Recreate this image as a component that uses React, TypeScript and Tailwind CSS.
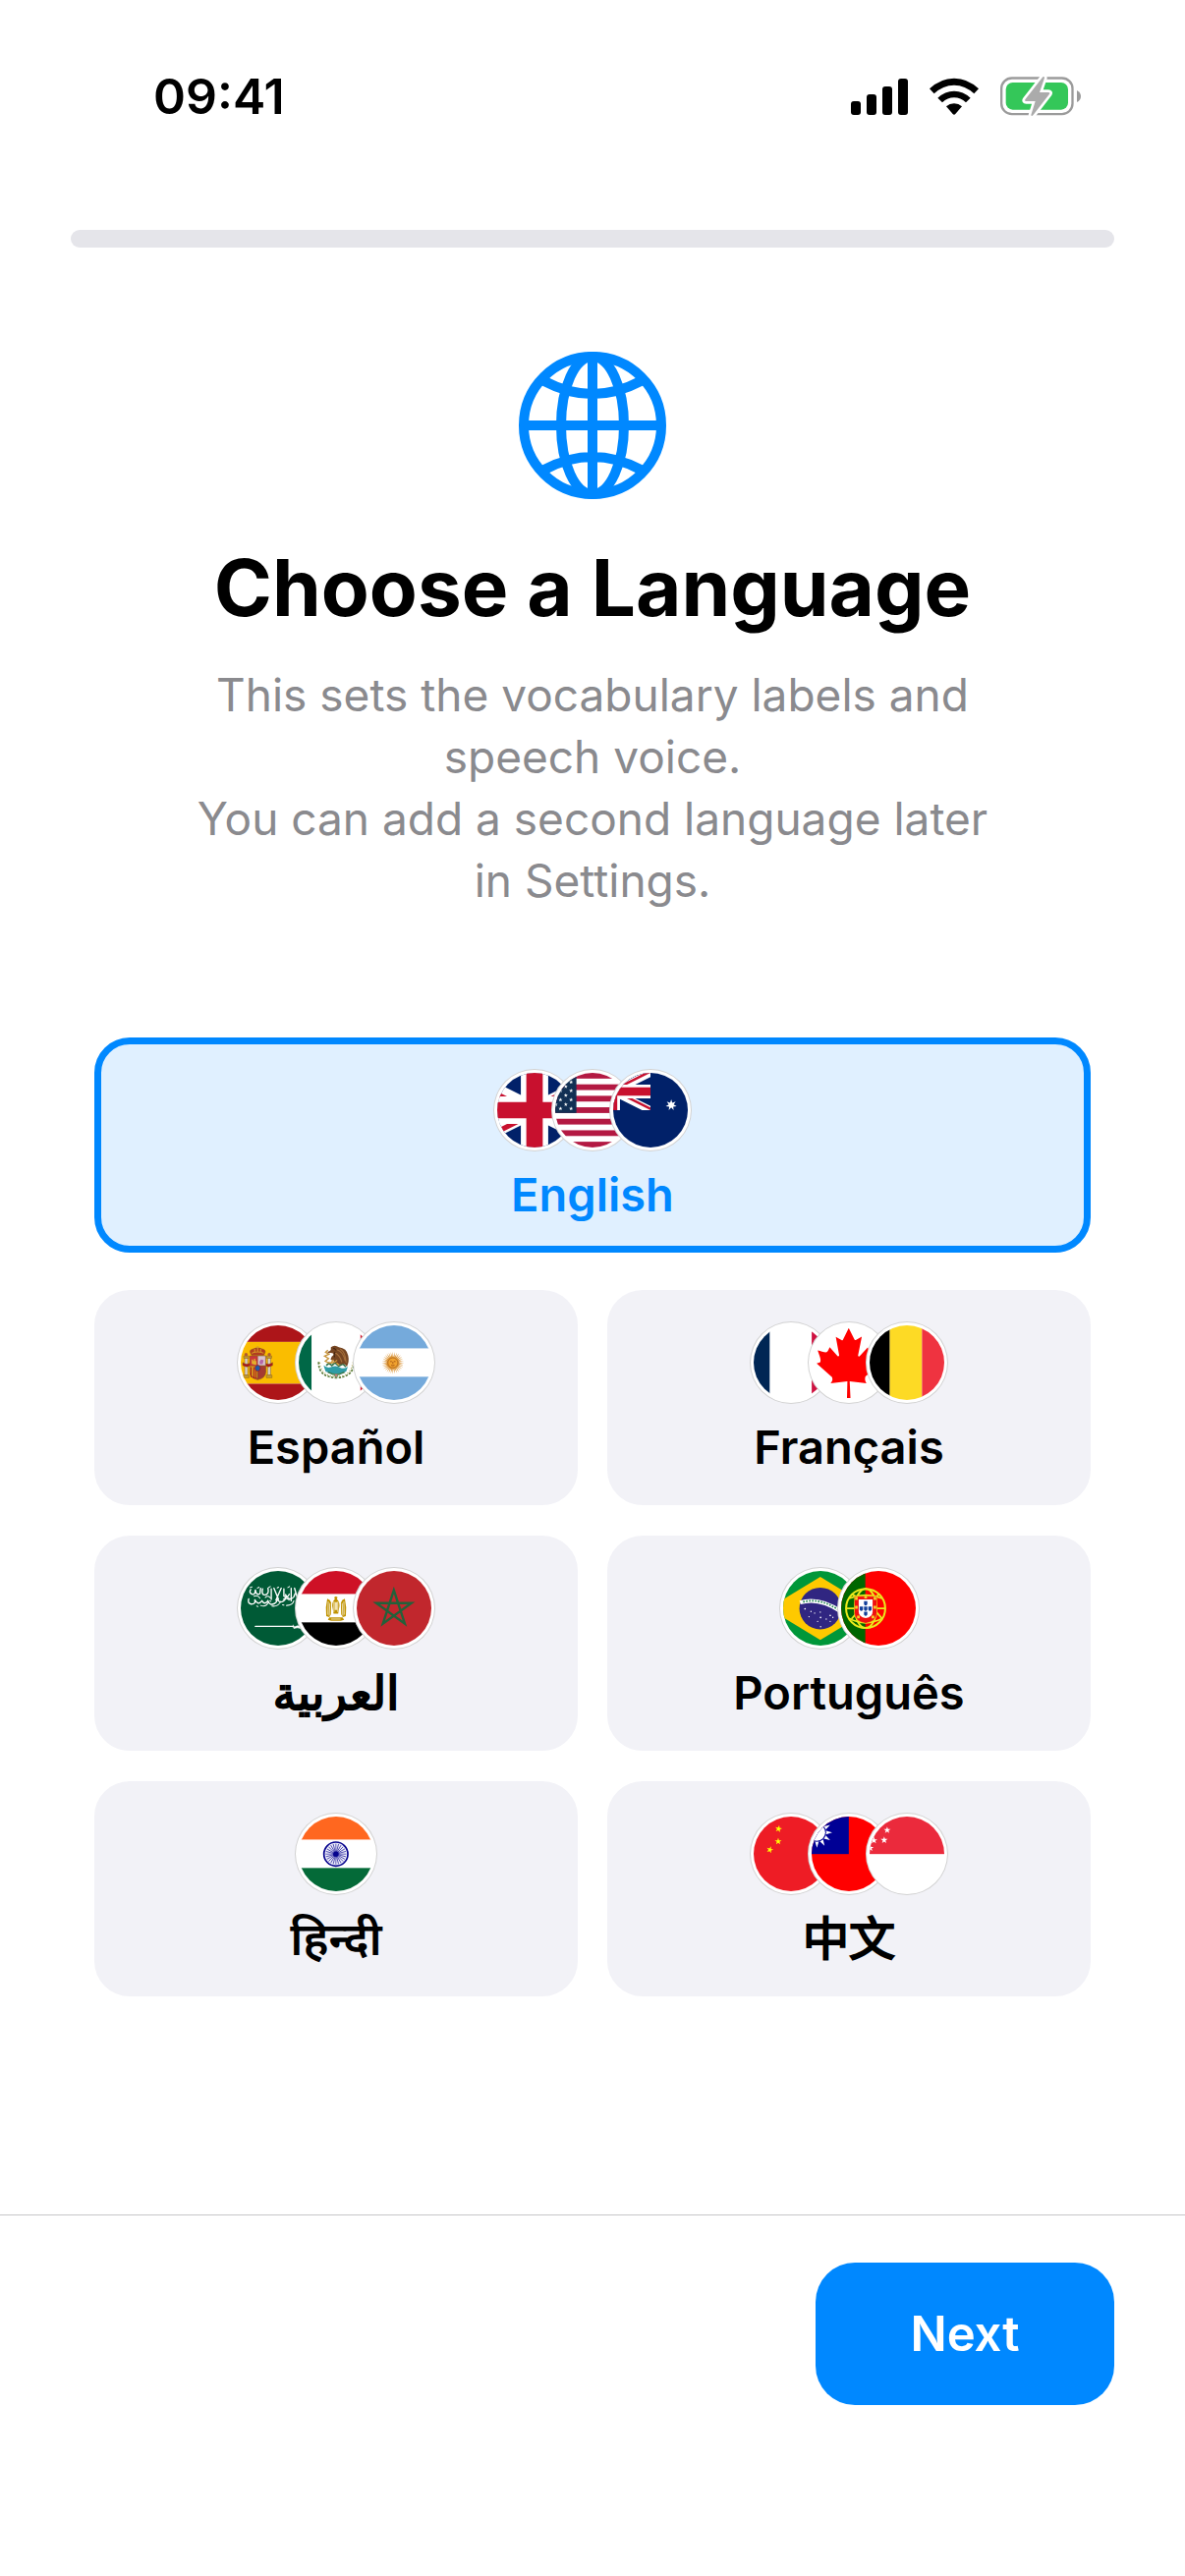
import { useState } from 'react';
import type { ReactNode } from 'react';

const starPoints = (cx: number, cy: number, r: number, tips = 5, inner = 0.382, turn = 0) => {
    const points: string[] = [];
    for (let i = 0; i < tips * 2; i++) {
        const radius = i % 2 === 0 ? r : r * inner;
        const angle = (Math.PI * i) / tips - Math.PI / 2 + turn;
        points.push(`${(cx + radius * Math.cos(angle)).toFixed(1)},${(cy + radius * Math.sin(angle)).toFixed(1)}`);
    }
    return points.join(' ');
};

// Three horizontal or vertical bands on the 225 unit flag canvas
function Bands({ colors, at, vertical = false }: { colors: string[]; at: [number, number]; vertical?: boolean }) {
    const edges = [0, at[0], at[1], 225];
    return (
        <>
            {colors.map((color, i) =>
                vertical ? (
                    <rect key={i} x={edges[i]} y="0" width={edges[i + 1] - edges[i]} height="225" fill={color} />
                ) : (
                    <rect key={i} x="0" y={edges[i]} width="225" height={edges[i + 1] - edges[i]} fill={color} />
                )
            )}
        </>
    );
}

function UnionJack({ id }: { id: string }) {
    return (
        <>
            <clipPath id={`${id}-frame`}>
                <path d="M0 0h60v30H0z" />
            </clipPath>
            <clipPath id={`${id}-saltire`}>
                <path d="M30 15h30v15zv15H0zH0V0zV0h30z" />
            </clipPath>
            <g clipPath={`url(#${id}-frame)`}>
                <path d="M0 0h60v30H0z" fill="#012169" />
                <path d="M0 0l60 30M60 0L0 30" stroke="#fff" strokeWidth="6" />
                <path d="M0 0l60 30M60 0L0 30" stroke="#C8102E" strokeWidth="4" clipPath={`url(#${id}-saltire)`} />
                <path d="M30 0v30M0 15h60" stroke="#fff" strokeWidth="11" />
                <path d="M30 0v30M0 15h60" stroke="#C8102E" strokeWidth="6.6" />
            </g>
        </>
    );
}

const flags: Record<string, ReactNode> = {
    gb: (
        <g transform="translate(-112.5 0) scale(7.5)">
            <UnionJack id="gb" />
        </g>
    ),
    us: (
        <>
            <rect width="225" height="225" fill="#fff" />
            {[0, 2, 4, 6, 8, 10, 12].map((i) => (
                <rect key={i} x="0" y={i * 17.3} width="225" height="17.3" fill="#B31942" />
            ))}
            <rect width="64" height="121" fill="#123054" />
            {[28, 54, 81, 108].map((y) => (
                <g key={y} fill="#fff">
                    <polygon points={starPoints(48, y, 6.5)} />
                    <polygon points={starPoints(16, y, 6.5)} />
                    <polygon points={starPoints(32, y - 13, 6.5)} />
                    <polygon points={starPoints(2, y - 13, 6.5)} />
                </g>
            ))}
        </>
    ),
    au: (
        <>
            <rect width="225" height="225" fill="#012169" />
            <g transform="translate(-112.5 0) scale(3.75)">
                <UnionJack id="au" />
            </g>
            <polygon points={starPoints(175, 97, 17, 7, 0.45)} fill="#fff" />
        </>
    ),
    es: (
        <>
            <Bands colors={['#AD1519', '#FABD00', '#AD1519']} at={[50, 176]} />
            <g stroke="#8A5A20" strokeWidth="1.5">
                <path d="M12 98h9v52h-9zM81 98h9v52h-9z" fill="#D9D2C8" />
                <path d="M9 92h15v7H9zM78 92h15v7H78zM8 150h17v8H8zM77 150h17v8H77z" fill="#C8A02C" />
                <path d="M6 112q12 10 24 0v9q-12 8-24 0zM72 112q12 10 24 0v9q-12 8-24 0z" fill="#AD1519" />
                <path d="M27 92h48v48q0 20-24 24-24-4-24-24z" fill="#C9363B" />
                <path d="M51 92h24v30H51z" fill="#D9C3CF" />
                <path d="M27 122h24v38q-24-4-24-20z" fill="#D9A520" />
                <path d="M51 122h24v18q0 17-24 22z" fill="#A53A32" />
                <path d="M33 90q-12-16 5-19 13-8 26 0 17 3 5 19z" fill="#B33D20" />
            </g>
            <path d="M31 126v30M39 126v34M45 126v34" stroke="#AD1519" strokeWidth="3" />
            <path d="M33 116v-13h4v4h3v-6h4v6h3v13z" fill="#E3B02C" />
            <path d="M57 117q-2-10 5-14l7 2-3 12z" fill="#B366A8" />
            <ellipse cx="51" cy="129" rx="8" ry="9" fill="#1F5CA8" stroke="#AD1519" strokeWidth="2" />
            <path d="M33 84q18-8 36 0M42 82V71M51 80V62M60 82V71M46 66h10" stroke="#D8A126" strokeWidth="3" fill="none" />
            <circle cx="16" cy="88" r="5" fill="#B05A30" />
            <circle cx="86" cy="88" r="5" fill="#B05A30" />
        </>
    ),
    mx: (
        <>
            <Bands colors={['#006847', '#FFFFFF', '#CE1126']} at={[39, 186]} vertical />
            <path d="M60 110q-1 46 53 48 54-2 53-48" fill="none" stroke="#5B7B3A" strokeWidth="5" strokeDasharray="7 4" />
            <path d="M64 112q2 40 49 43 47-3 49-43" fill="none" stroke="#B0A24A" strokeWidth="3" strokeDasharray="3 6" />
            <path d="M75 121q12 10 24 4 14-6 27 3 10 5 22-4l-5 15q-30 15-62 0z" fill="#2F9CA5" />
            <path d="M83 121l8-7 9 7 9-8 12 10 12-7 9 9M88 141q24 14 50 0" fill="none" stroke="#35724A" strokeWidth="5" />
            <path d="M97 66q11-9 24 0 24 3 28 25 4 18-4 34-4-10-13-9-9 5-19-1-8-9-17-12 2-10 10-14-1-7-11-6-9 2-8-4 6 1 10-5z" fill="#754522" />
            <path d="M116 74q17 4 24 33M125 71q16 10 18 42M110 83q14 7 20 28" fill="none" stroke="#A7713D" strokeWidth="3" />
            <path d="M110 80q-5 8-2 16M104 69q6 1 8 6" fill="none" stroke="#3E210E" strokeWidth="3" />
            <path d="M88 75l-7 6 10 6-13 6 12 7-10 8q13 9 28 3l8-6" fill="none" stroke="#C7953B" strokeWidth="4" />
            <path d="M98 112l7-9M122 121l-8-8" stroke="#D59A38" strokeWidth="4" />
            <path d="M105 147h15l-7 13z" fill="#D4767B" />
            <path d="M100 148h7l5 10M125 148h-6l-5 10" fill="none" stroke="#5E9A63" strokeWidth="3" />
        </>
    ),
    ar: (
        <>
            <Bands colors={['#75AADB', '#FFFFFF', '#75AADB']} at={[70, 155]} />
            <polygon points={starPoints(109, 113, 34, 32, 0.5)} fill="#D9902E" />
            <circle cx="109" cy="113" r="15" fill="#F0A22E" stroke="#A45E1C" strokeWidth="2" />
            <path d="M101 109h5M112 109h5M109 110v6M104 120q5 3 10 0" fill="none" stroke="#85340A" strokeWidth="2" />
        </>
    ),
    fr: <Bands colors={['#002654', '#FFFFFF', '#CE1140']} at={[49, 175]} vertical />,
    ca: (
        <>
            <rect width="225" height="225" fill="#fff" />
            <path
                transform="translate(-127 -64) scale(.757)"
                d="m201 232-13.3 4.4 61.4 54c4.7 13.7-1.6 17.8-5.6 25l66.6-8.4-1.6 67 13.9-.3-3.1-66.6 66.7 8c-4.1-8.7-7.8-13.3-4-27.2l61.3-51-10.7-4c-8.8-6.8 3.8-32.6 5.6-48.9 0 0-35.7 12.3-38 5.8l-9.2-17.5-32.6 35.8c-3.5.9-5-.5-5.9-3.5l15-74.8-23.8 13.4c-2 .9-4 .1-5.2-2.2l-23-46-23.6 47.8c-1.8 1.7-3.6 1.9-5 .7L264 130.8l13.7 74.1c-1.1 3-3.7 3.8-6.7 2.2l-31.2-35.3c-4 6.5-6.8 17.1-12.2 19.5-5.4 2.3-23.5-4.5-35.6-7 4.2 14.8 17 39.6 9 47.7z"
                fill="#FF0000"
            />
        </>
    ),
    be: <Bands colors={['#000000', '#FDDA25', '#EF3340']} at={[61, 158]} vertical />,
    sa: (
        <>
            <rect width="225" height="225" fill="#005A36" />
            <g fill="none" stroke="#fff" strokeWidth="4" strokeLinecap="round">
                <path d="M24 84q-4 14 8 16 14 0 10-14 10 20 22 4 8 14 18 0 6 16 20 8 10-6 6-16 10 20 24 6 8-10 2-18 12 24 26 8l4-10" />
                <path d="M30 56q-6 10 4 14t10-14q2 20 14 12l2-16M66 54q-4 20 8 18t8-20M92 54v32M100 52l14 34M122 52l-16 36M130 54v22q12 6 16-6M152 52v38M162 52l10 34" />
                <path d="M60 104q16 6 24-10M94 106q20 2 26-14M138 104q18 0 22-14M40 76q12-4 18 6M74 80q8-8 16 2M128 86q10-8 18 2" strokeWidth="3" />
                <path d="M28 50l6-2M50 52l5-3M84 50l5-3M110 51l4-2M142 50l5-3M48 106l4 1M88 90l3 2M126 102l4 1" strokeWidth="3" />
            </g>
            <path d="M44 167h116" stroke="#fff" strokeWidth="4" strokeLinecap="round" />
            <path d="M158 162v10M160 170q10-8 22-3l-2 6q-8-4-20 0z" fill="#fff" stroke="#fff" strokeWidth="2" />
        </>
    ),
    eg: (
        <>
            <Bands colors={['#CE1126', '#FFFFFF', '#000000']} at={[70, 155]} />
            <g fill="#C09300">
                <path d="M107 80q4-6 10-1l-2 6q8 6 8 20l-4 24h-14l-4-24q0-14 8-20z" />
                <path d="M86 84q10 3 12 12l-1 35-5 8-9-3q-3-28 3-52zM139 84q-10 3-12 12l1 35 5 8 9-3q3-28-3-52z" />
                <path d="M92 140h40l5 7-10 3H98l-10-3z" />
            </g>
            <path d="M89 92l-1 40M94 97l-2 38M136 92l1 40M131 97l2 38M106 92v32M118 92v32M98 145h28" stroke="#fff" strokeWidth="2" />
            <path d="M108 94h9v24h-9z" fill="#F2E3B1" />
        </>
    ),
    ma: (
        <>
            <rect width="225" height="225" fill="#C1272D" />
            <path d="M112 58l33 101-86-62h106l-86 62z" fill="none" stroke="#22613A" strokeWidth="7" />
        </>
    ),
    br: (
        <>
            <rect width="225" height="225" fill="#009739" />
            <path d="M112 18l157 95-157 95-157-95z" fill="#FEC900" />
            <circle cx="112" cy="113" r="63" fill="#302681" />
            <path d="M51 95q58-17 121 26" fill="none" stroke="#fff" strokeWidth="12" />
            <path d="M60 93q52-12 105 23" fill="none" stroke="#2A8A58" strokeWidth="5" strokeDasharray="5 4" />
            <g fill="#fff">
                <circle cx="66" cy="114" r="2.5" />
                <circle cx="84" cy="122" r="2" />
                <circle cx="78" cy="138" r="2" />
                <circle cx="95" cy="127" r="2" />
                <circle cx="112" cy="124" r="2" />
                <circle cx="113" cy="140" r="2.5" />
                <circle cx="104" cy="152" r="2" />
                <circle cx="130" cy="145" r="2" />
                <circle cx="142" cy="134" r="2.5" />
                <circle cx="150" cy="140" r="2" />
                <circle cx="142" cy="152" r="2" />
                <circle cx="113" cy="168" r="2" />
            </g>
        </>
    ),
    pt: (
        <>
            <rect width="225" height="225" fill="#FF0000" />
            <rect width="73" height="225" fill="#006600" />
            <g fill="none" stroke="#EBE91C" strokeWidth="6">
                <circle cx="74" cy="113" r="59" />
                <ellipse cx="74" cy="113" rx="32" ry="59" />
                <path d="M15 113h118M24 83q50-20 100 0M24 143q50 26 100 0M32 70q50 22 92 74M116 70q-40 20-84 74" strokeWidth="5" />
            </g>
            <path d="M40 76h68v50q0 26-34 32-34-6-34-32z" fill="#F01010" stroke="#EBE91C" strokeWidth="1.5" />
            <path d="M53 86h42v36q0 17-21 20-21-3-21-20z" fill="#fff" />
            <path d="M69 91h10v10q-5 7-10 0zM69 107h10v10q-5 7-10 0zM69 123h10v9q-5 7-10 0zM56 107h10v10q-5 7-10 0zM82 107h10v10q-5 7-10 0z" fill="#12409A" />
            <g fill="#F3D32B">
                <path d="M42 78h8v9h-8zM70 75h8v8h-8zM98 78h8v9h-8zM42 105h8v9h-8zM98 105h8v9h-8zM48 135h8v8h-8zM92 135h8v8h-8z" />
            </g>
        </>
    ),
    in: (
        <>
            <Bands colors={['#FF671F', '#FFFFFF', '#046A38']} at={[70, 155]} />
            <circle cx="112" cy="113" r="36" fill="#ECECFA" stroke="#06038D" strokeWidth="5" />
            {Array.from({ length: 24 }, (_, i) => (
                <path key={i} d="M112 113v-31" stroke="#06038D" strokeWidth="1.8" transform={`rotate(${i * 15} 112 113)`} />
            ))}
            <circle cx="112" cy="113" r="8" fill="#06038D" />
        </>
    ),
    cn: (
        <>
            <rect width="225" height="225" fill="#EE1C25" />
            <g fill="#FFFF00">
                <polygon points={starPoints(75, 37, 11, 5, 0.382, 0.2)} />
                <polygon points={starPoints(74, 75, 11)} />
                <polygon points={starPoints(49, 100, 11, 5, 0.382, 0.3)} />
            </g>
        </>
    ),
    tw: (
        <>
            <rect width="225" height="225" fill="#FF0000" />
            <rect width="112" height="113" fill="#000095" />
            <polygon points={starPoints(16, 48, 46, 12, 0.55)} fill="#fff" />
            <circle cx="16" cy="48" r="28" fill="#000095" />
            <circle cx="16" cy="48" r="25" fill="#fff" />
        </>
    ),
    sg: (
        <>
            <rect width="225" height="225" fill="#fff" />
            <rect width="225" height="113" fill="#EB2A3C" />
            <g fill="#fff">
                <polygon points={starPoints(53, 41, 11)} />
                <polygon points={starPoints(44, 71, 11)} />
                <polygon points={starPoints(13, 72, 11)} />
                <polygon points={starPoints(2, 95, 11)} />
            </g>
        </>
    ),
};

// The Arabic and Chinese fonts have no semibold cut, so a thin stroke thickens the regular one
const regular = 'text-[47px] font-semibold leading-[57px]';
const stroked = 'text-[47px] font-normal leading-[57px] [-webkit-text-stroke:2px_currentColor]';

const languages = [
    { code: 'en', name: 'English', flags: ['gb', 'us', 'au'], label: regular },
    { code: 'es', name: 'Español', flags: ['es', 'mx', 'ar'], label: regular },
    { code: 'fr', name: 'Français', flags: ['fr', 'ca', 'be'], label: regular },
    { code: 'ar', name: 'العربية', flags: ['sa', 'eg', 'ma'], label: stroked },
    { code: 'pt', name: 'Português', flags: ['br', 'pt'], label: regular },
    { code: 'hi', name: 'हिन्दी', flags: ['in'], label: regular },
    { code: 'zh', name: '中文', flags: ['cn', 'tw', 'sg'], label: stroked },
];

function Flag({ code }: { code: string }) {
    return (
        <span className="size-[84px] rounded-full bg-white p-1 -ml-[25px] shadow-[inset_0_0_0_1px_rgba(0,0,0,0.18)] first:ml-0">
            <svg viewBox="0 0 225 225" className="block size-full rounded-full" aria-hidden="true">
                {flags[code]}
            </svg>
        </span>
    );
}

function StatusBar() {
    return (
        <header className="flex h-[196px] items-center justify-between pl-[156px] pr-[106px] text-black">
            <time className="text-[50px] font-semibold leading-none">09:41</time>
            <div className="flex items-center gap-[22px]">
                {/* Signal */}
                <svg width="58" height="38" viewBox="0 0 58 38" aria-hidden="true">
                    <rect x="0" y="24" width="10" height="14" rx="3" />
                    <rect x="16" y="17" width="10" height="21" rx="3" />
                    <rect x="32" y="9" width="10" height="29" rx="3" />
                    <rect x="48" y="1" width="10" height="37" rx="3" />
                </svg>
                {/* Wi-Fi */}
                <svg width="50" height="38" viewBox="287 55 150 114" aria-hidden="true">
                    <path d="M287 89q33-32 75-32t75 32l-14 15q-27-26-61-26t-61 26z" />
                    <path d="M312 117q22-21 50-21t50 21l-14 14q-16-15-36-15t-36 15z" />
                    <path d="M338 143q10-9 24-9t24 9l-20 23q-4 4-8 0z" />
                </svg>
                {/* Battery */}
                <svg width="82" height="42" viewBox="504 50 246 126" aria-hidden="true">
                    <rect x="507.500" y="57.500" width="217" height="110" rx="32" fill="none" stroke="#9B9B9B" strokeWidth="7" />
                    <rect x="521" y="71" width="190" height="83" rx="21" fill="#34C759" />
                    <path d="M738 95q12 6 12 18t-12 18z" fill="#9B9B9B" />
                    <path
                        d="M634 54l-54 69q-3 5 3 5h28l-13 42q1 5 6 1l50-65q3-5-3-5h-27l15-44q-1-6-5-3z"
                        fill="#ABABAB"
                        stroke="#fff"
                        strokeWidth="16"
                        strokeLinejoin="round"
                        paintOrder="stroke"
                    />
                </svg>
            </div>
        </header>
    );
}

function GlobeIcon() {
    return (
        <svg width="150" height="150" viewBox="0 0 150 150" fill="none" stroke="#0088FF" strokeWidth="10" strokeLinecap="round" aria-hidden="true">
            <circle cx="75" cy="75" r="70" />
            <ellipse cx="75" cy="75" rx="32" ry="70" />
            <path d="M75 7v136M9 75h132M26 30q49 26 98 0M26 120q49-26 98 0" />
        </svg>
    );
}

export default function App() {
    const [selected, setSelected] = useState('en');

    return (
        <div className="flex min-h-screen flex-col bg-white font-['Inter','DejaVu_Sans','Noto_Sans','Noto_Sans_CJK_SC',sans-serif]">
            <StatusBar />

            {/* Onboarding progress */}
            <div className="px-[72px] pt-[38px]">
                <div
                    role="progressbar"
                    aria-label="Setup progress"
                    aria-valuenow={0}
                    aria-valuemin={0}
                    aria-valuemax={100}
                    className="h-[18px] rounded-full bg-[#E5E5EA]"
                />
            </div>

            <main className="flex-1 px-24 pt-[106px]">
                <div className="flex flex-col items-center text-center">
                    <GlobeIcon />
                    <h1 className="mt-10 text-[80px] font-bold leading-[100px] text-black">Choose a Language</h1>
                    <p className="mt-7 max-w-[830px] text-[46px] leading-[63px] text-[#8A8A8E]">
                        This sets the vocabulary labels and speech voice.
                        <br />
                        You can add a second language later in Settings.
                    </p>
                </div>

                {/* Languages */}
                <div className="mt-32 grid grid-cols-2 gap-x-[30px] gap-y-[31px]">
                    {languages.map(({ code, name, flags: codes, label }) => (
                        <button
                            key={code}
                            type="button"
                            lang={code}
                            aria-pressed={selected === code}
                            onClick={() => setSelected(code)}
                            className={`flex h-[219px] cursor-pointer flex-col items-center justify-center gap-[15px] rounded-[36px] border-[7px] first:col-span-2 first:mb-[7px] ${selected === code ? 'border-[#0088FF] bg-[#E0F0FF] text-[#0088FF]' : 'border-[#F2F2F7] bg-[#F2F2F7] text-black'}`}
                        >
                            <span className="flex">
                                {codes.map((flag) => (
                                    <Flag key={flag} code={flag} />
                                ))}
                            </span>
                            <span className={label}>{name}</span>
                        </button>
                    ))}
                </div>
            </main>

            <footer className="flex justify-end border-t border-[#C6C6C8] px-[72px] pt-12 pb-[174px]">
                <button
                    type="button"
                    className="h-[145px] w-[304px] cursor-pointer rounded-[40px] bg-[#0088FF] text-[49px] font-semibold text-white"
                >
                    Next
                </button>
            </footer>
        </div>
    );
}
